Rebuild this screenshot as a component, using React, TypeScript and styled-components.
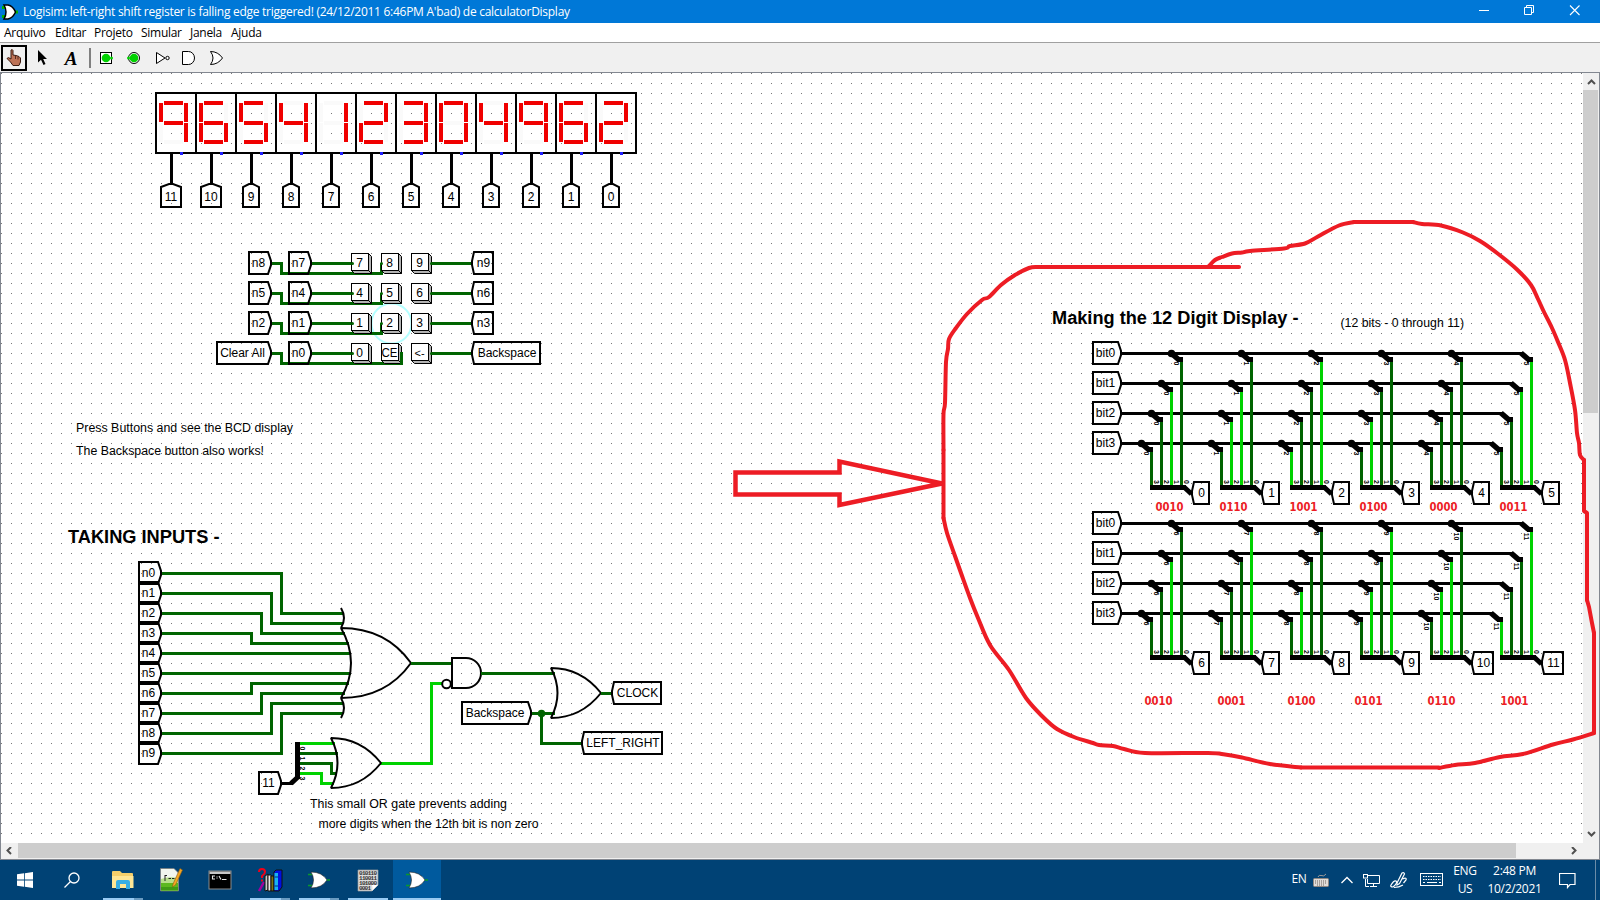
import React from "react";
import styled, { createGlobalStyle } from "styled-components";

const DARK = "#006400";
const LIVE = "#00d200";
const INK = "#000000";
const MARK = "#ed1c24";

const GlobalStyle = createGlobalStyle`
  * { box-sizing: border-box; }
  body { margin: 0; background: #fff; overflow: hidden; }
`;

const Desktop = styled.div`
  position: relative;
  width: 1600px;
  height: 900px;
  display: flex;
  flex-direction: column;
  overflow: hidden;
  font-family: "Open Sans", "Noto Sans", sans-serif;
`;

const TitleBar = styled.header`
  height: 23px;
  flex: none;
  display: flex;
  align-items: center;
  background: #0078d7;
  color: #fff;
  font-size: 12px;
`;
const TitleIcon = styled.div`
  width: 23px;
  height: 23px;
`;
const TitleText = styled.span`
  flex: 1;
  letter-spacing: -0.27px;
  white-space: nowrap;
  line-height: 22px;
`;
const WindowButton = styled.div`
  width: 45px;
  height: 23px;
`;
const WindowButtons = styled.div`
  display: flex;
  margin-right: 3px;
`;

const MenuBar = styled.nav`
  height: 20px;
  flex: none;
  display: flex;
  padding-left: 4px;
  background: #fff;
  border-bottom: 1px solid #a0a0a0;
  font-size: 12px;
  line-height: 19px;
  color: #000;
`;
const MenuItem = styled.span<{ $w: number }>`
  width: ${(p) => p.$w}px;
  letter-spacing: -0.28px;
  white-space: nowrap;
`;

const ToolBar = styled.div`
  height: 29px;
  flex: none;
  display: flex;
  align-items: center;
  background: #f0f0f0;
`;
const Tool = styled.div<{ $selected?: boolean }>`
  width: 26px;
  height: 26px;
  margin: 1px 1px 0;
  border: 2px solid ${(p) => (p.$selected ? "#000" : "transparent")};
  display: flex;
  align-items: center;
  justify-content: center;
`;
const ToolLetter = styled.span`
  font: italic bold 19px "Liberation Serif", serif;
  color: #000;
  padding: 1px 0 0 2px;
`;
const ToolDivider = styled.div`
  width: 2px;
  height: 20px;
  margin: 1px 1px 0 5px;
  background: #808080;
`;

const Workspace = styled.main`
  height: 788px;
  flex: none;
  display: grid;
  grid-template-columns: 1582px 15px;
  grid-template-rows: 770px 15px;
  border: 1px solid #828790;
  background: #f0f0f0;
`;
const CanvasPane = styled.div`
  background: #fff;
  overflow: hidden;
  svg { display: block; }
`;
const VScroll = styled.div`
  display: flex;
  flex-direction: column;
  background: #f0f0f0;
`;
const HScroll = styled.div`
  display: flex;
  background: #f0f0f0;
  grid-column: 1 / 3;
`;
const ScrollArrow = styled.div`
  width: 17px;
  height: 17px;
  display: flex;
  align-items: center;
  justify-content: center;
`;
const VThumb = styled.div`
  height: 323px;
  background: #cdcdcd;
  margin-bottom: auto;
`;
const HThumb = styled.div`
  width: 1498px;
  background: #cdcdcd;
  margin-right: auto;
`;
const Corner = styled.div`
  width: 16px;
`;

const TaskBar = styled.footer`
  height: 40px;
  flex: none;
  display: flex;
  background: #004275;
  color: #fff;
`;
const Task = styled.div<{ $active?: boolean; $w?: number; $shift?: number }>`
  width: ${(p) => p.$w ?? 49}px;
  height: 40px;
  padding-right: ${(p) => p.$shift ?? 0}px;
  position: relative;
  display: flex;
  align-items: center;
  justify-content: center;
  background: ${(p) => (p.$active ? "#005a9e" : "transparent")};
`;
const Underline = styled.div<{ $left: number; $w: number; $dim?: boolean }>`
  position: absolute;
  bottom: 0;
  left: ${(p) => p.$left}px;
  width: ${(p) => p.$w}px;
  height: 2px;
  background: ${(p) => (p.$dim ? "#6a9bc1" : "#99cbf3")};
`;
const Tray = styled.div`
  margin-left: auto;
  display: flex;
  align-items: center;
  font-size: 12px;
`;
const TrayCell = styled.div<{ $w: number }>`
  width: ${(p) => p.$w}px;
  height: 40px;
  display: flex;
  align-items: center;
  justify-content: center;
  letter-spacing: -0.3px;
  white-space: nowrap;
`;
const InputMode = styled.span`
  padding-bottom: 4px;
`;
const TwoLine = styled.div`
  text-align: center;
  line-height: 18px;
`;
const ShowDesktop = styled.div`
  width: 5px;
  height: 40px;
  border-left: 1px solid #6a8ca8;
`;
const Annotation = styled.svg`
  position: absolute;
  left: 0;
  top: 0;
  pointer-events: none;
`;

type Pt = [number, number];

const Wire = ({ pts, c = DARK, w = 3 }: { pts: Pt[]; c?: string; w?: number }) => (
  <polyline
    points={pts.map(([x, y]) => `${x + 0.5},${y + 0.5}`).join(" ")}
    fill="none"
    stroke={c}
    strokeWidth={w}
    strokeLinejoin="miter"
    strokeLinecap="square"
  />
);

const Label = ({
  x, y, w, children, size = 12, bold, anchor = "start",
}: {
  x: number; y: number; w?: number; children: string; size?: number; bold?: boolean;
  anchor?: "start" | "middle";
}) => (
  <text
    x={x}
    y={y}
    fontSize={size}
    fontWeight={bold ? 700 : 400}
    textAnchor={anchor}
    textLength={w}
    lengthAdjust="spacingAndGlyphs"
  >
    {children}
  </text>
);

/* Net label whose tip sits on a grid point: east (tip right), west or north. */
const Tunnel = ({ x, y, w, dir, text }: { x: number; y: number; w: number; dir: "e" | "w" | "n"; text: string }) => {
  let d: string;
  let tx: number;
  let ty = y + 4;
  if (dir === "n") {
    const h = w / 2;
    d = `M${x - 2} ${y + 1}H${x + 2}L${x + h} ${y + 4}V${y + 24}H${x - h}V${y + 4}Z`;
    tx = x;
    ty = y + 18;
  } else {
    const s = dir === "e" ? -1 : 1;
    const tip = dir === "e" ? x : x + 1;
    d = `M${tip} ${y - 2}V${y + 2}L${x + s * 3} ${y + 11}H${x + s * w}V${y - 11}H${x + s * 3}Z`;
    tx = x + (s * (w + 2)) / 2 + (dir === "e" ? -0.5 : 0.5);
  }
  return (
    <g>
      <path d={d} fill="none" stroke={INK} strokeWidth={2} />
      <Label x={tx} y={ty} anchor="middle">{text}</Label>
    </g>
  );
};

const SEGMENTS: Record<string, [number, number, number, number]> = {
  a: [8, 8, 19, 4],
  b: [28, 10, 4, 19],
  c: [28, 30, 4, 19],
  d: [8, 47, 19, 4],
  e: [3, 30, 4, 19],
  f: [3, 10, 4, 19],
  g: [8, 28, 19, 4],
};
const LIT: Record<string, string> = {
  "0": "abcdef", "1": "bc", "2": "abged", "3": "abgcd", "4": "fgbc",
  "5": "afgcd", "6": "afgecd", "9": "abfgc",
};

const HexDigit = ({ i, v }: { i: number; v: string }) => {
  const x = 156 + 40 * i;
  return (
    <g>
      {Object.entries(SEGMENTS).map(([k, [sx, sy, w, h]]) =>
        LIT[v].includes(k) ? null : <rect key={k} x={x + sx} y={93 + sy} width={w} height={h} fill="#fafafa" />
      )}
      {Object.entries(SEGMENTS).map(([k, [sx, sy, w, h]]) =>
        LIT[v].includes(k) ? <rect key={k} x={x + sx} y={93 + sy} width={w} height={h} fill="#f00000" /> : null
      )}
      <rect x={x} y={93} width={40} height={60} fill="none" stroke={INK} strokeWidth={2} />
      <rect x={x + 24} y={152} width={3} height={3} fill="#2020ff" />
      <Wire pts={[[x + 15, 154], [x + 15, 182]]} c={INK} />
      <Tunnel x={x + 15} y={183} w={i < 2 ? 20 : 16} dir="n" text={String(11 - i)} />
    </g>
  );
};

const PushButton = ({ x, y, text }: { x: number; y: number; text: string }) => (
  <g>
    <path d={`M${x + 17.5} ${y + 0.5}l3 3v17h-17l-3 -3z`} fill="#b4b4b4" stroke={INK} />
    <rect x={x + 0.5} y={y + 0.5} width={17} height={17} fill="#fff" stroke={INK} />
    <path d={`M${x + 17.5} ${y + 17.5}l3 3`} stroke={INK} />
    <Label x={x + 8.5} y={y + 13.5} anchor="middle" w={text === "CE" ? 16 : undefined} size={text === "<-" ? 11 : 12}>{text}</Label>
  </g>
);

const Tiny = ({ x, y, children }: { x: number; y: number; children: string }) => (
  <text transform={`translate(${x} ${y}) rotate(90)`} fontSize={7} fontWeight={700} textAnchor="middle">
    {children}
  </text>
);

const OrGate = ({ x, y, size }: { x: number; y: number; size: 50 | 70 }) => {
  const [cx, h, back] = size === 70 ? [25, 35, 50] : [20, 25, 37];
  return (
    <path
      d={`M${x} ${y}Q${x - cx} ${y - h} ${x - size} ${y - h}Q${x - back} ${y} ${x - size} ${y + h}Q${x - cx} ${y + h} ${x} ${y}Z`}
      fill="none"
      stroke={INK}
      strokeWidth={2}
      strokeLinejoin="bevel"
    />
  );
};

const Bank = ({ y0, first, values }: { y0: number; first: number; values: string[] }) => (
  <g>
    {[0, 1, 2, 3].map((b) => {
      const y = y0 + 30 * b;
      return (
        <g key={b}>
          <Wire pts={[[1122, y], [1520 - 10 * b, y]]} c={INK} />
          <Tunnel x={1121} y={y} w={28} dir="e" text={`bit${b}`} />
        </g>
      );
    })}
    {values.map((v, g) => (
      <g key={g}>
        {[0, 1, 2, 3].map((b) => {
          const jx = 1171 + 70 * g - 10 * b;
          const y = y0 + 30 * b;
          return (
            <g key={b}>
              <rect x={jx + 9} y={y + 9} width={3} height={y0 + 132 - y - 9} fill={v[3 - b] === "1" ? LIVE : DARK} />
              {g < 5 && <circle cx={jx + 0.5} cy={y + 0.5} r={3.8} />}
              <path d={`M${jx} ${y}L${jx + 7.5} ${y + 6.5}`} stroke={INK} strokeWidth={5.5} />
              <rect x={jx + 6} y={y + 4} width={6} height={5} />
              <Tiny x={jx + 3} y={y + (first + g > 9 ? 13.5 : 10.5)}>{String(first + g)}</Tiny>
            </g>
          );
        })}
        <rect x={1150 + 70 * g} y={y0 + 132} width={36} height={5} />
        <path d={`M${1184 + 70 * g} ${y0 + 134}L${1191.5 + 70 * g} ${y0 + 141}`} stroke={INK} strokeWidth={5} />
        {["3", "2", "1", "0"].map((t, k) => (
          <Tiny key={t} x={1154 + 70 * g + 10 * k} y={y0 + 129}>{t}</Tiny>
        ))}
        <Tunnel x={1191 + 70 * g} y={y0 + 140} w={first + g > 9 ? 22 : 18} dir="w" text={String(first + g)} />
      </g>
    ))}
  </g>
);

const KEY_ROWS: { y: number; l: string; m: string; r: string; keys: string[] }[] = [
  { y: 263, l: "n8", m: "n7", r: "n9", keys: ["7", "8", "9"] },
  { y: 293, l: "n5", m: "n4", r: "n6", keys: ["4", "5", "6"] },
  { y: 323, l: "n2", m: "n1", r: "n3", keys: ["1", "2", "3"] },
  { y: 353, l: "Clear All", m: "n0", r: "Backspace", keys: ["0", "CE", "<-"] },
];

const INPUT_BENDS: [number, number, number][] = [
  [281, 613, 341], [271, 623, 341], [261, 633, 343], [251, 643, 347], [0, 653, 349],
  [0, 673, 349], [251, 683, 347], [261, 693, 343], [271, 703, 341], [281, 713, 341],
];

const Circuit = () => (
  <svg width={1582} height={770} viewBox="1 73 1582 770" fontFamily='"Liberation Sans", Arial, sans-serif'>
    <defs>
      <pattern id="grid" x={1} y={73} width={10} height={10} patternUnits="userSpaceOnUse">
        <rect width={1} height={1} fill="#777" />
      </pattern>
    </defs>
    <rect x={1} y={73} width={1582} height={770} fill="#fff" />
    <rect x={1} y={73} width={1582} height={770} fill="url(#grid)" />

    {"965412304962".split("").map((v, i) => <HexDigit key={i} i={i} v={v} />)}

    <circle cx={391.5} cy={323.5} r={20} fill="none" stroke="#b3ffff" strokeWidth={2} />
    {KEY_ROWS.map(({ y, l, m, r, keys }) => {
      const last = keys[1] === "CE";
      const end = last ? 401 : 381;
      return (
        <g key={y}>
          <Wire pts={[[272, y], [281, y], [281, y + 10], [end, y + 10], [end, y + 1]]} />
          <Wire pts={[[312, y], [351, y]]} />
          <Wire pts={[[431, y], [470, y]]} />
          <Tunnel x={271} y={y} w={last ? 54 : 22} dir="e" text={l} />
          <Tunnel x={311} y={y} w={22} dir="e" text={m} />
          <Tunnel x={471} y={y} w={last ? 69 : 22} dir="w" text={r} />
          <PushButton x={351} y={y - 10} text={keys[0]} />
          <PushButton x={381} y={y - 10} text={keys[1]} />
          <PushButton x={411} y={y - 10} text={keys[2]} />
          <circle cx={352.5} cy={y + 0.5} r={1.5} fill={DARK} />
          {last ? (
            <path d={`M401.5 ${y - 1}V${y + 11}`} stroke={DARK} strokeWidth={3} />
          ) : (
            <circle cx={381.5} cy={y + 0.5} r={1.5} fill={DARK} />
          )}
          <circle cx={431.5} cy={y + 0.5} r={1.5} fill={DARK} />
        </g>
      );
    })}

    <Label x={76} y={432} w={217}>Press Buttons and see the BCD display</Label>
    <Label x={76} y={455} w={188}>The Backspace button also works!</Label>
    <Label x={68} y={543} w={151.5} size={18} bold>TAKING INPUTS -</Label>

    {INPUT_BENDS.map(([bx, ty, ex], i) => {
      const y = 573 + 20 * i;
      return (
        <g key={i}>
          <Wire pts={bx ? [[162, y], [bx, y], [bx, ty], [ex, ty]] : [[162, y], [ex, y]]} />
          <Tunnel x={161} y={y} w={22} dir="e" text={`n${i}`} />
        </g>
      );
    })}
    <OrGate x={411} y={663} size={70} />
    <path d="M341 608Q347 618 341 628M341 698Q347 708 341 718" fill="none" stroke={INK} strokeWidth={2} />

    <Wire pts={[[412, 663], [451, 663]]} />
    <Wire pts={[[381, 763], [431, 763], [431, 683], [441, 683]]} c={LIVE} />
    <path d="M452 658H466A15 15 0 0 1 466 688H452Z" fill="none" stroke={INK} strokeWidth={2} />
    <circle cx={446.5} cy={684} r={4.3} fill="#fff" stroke={INK} strokeWidth={2} />
    <Wire pts={[[482, 673], [553, 673]]} />
    <Wire pts={[[532, 713], [553, 713]]} />
    <Wire pts={[[541, 713], [541, 743], [580, 743]]} />
    <circle cx={541.5} cy={713.5} r={3.8} fill={DARK} />
    <OrGate x={601} y={693} size={50} />
    <Wire pts={[[602, 693], [610, 693]]} />
    <Tunnel x={611} y={693} w={50} dir="w" text="CLOCK" />
    <Tunnel x={531} y={713} w={69} dir="e" text="Backspace" />
    <Tunnel x={581} y={743} w={81} dir="w" text="LEFT_RIGHT" />

    <Wire pts={[[301, 743], [333, 743]]} c={LIVE} />
    <Wire pts={[[301, 753], [336, 753]]} />
    <Wire pts={[[301, 763], [331, 763], [331, 773], [335, 773]]} />
    <Wire pts={[[301, 773], [321, 773], [321, 783], [332, 783]]} c={LIVE} />
    <OrGate x={381} y={763} size={50} />
    <rect x={295} y={742} width={5} height={37} />
    <path d="M299 776L291 783.5" stroke={INK} strokeWidth={5} />
    <Wire pts={[[282, 783], [291, 783]]} c={INK} />
    <Tunnel x={281} y={783} w={22} dir="e" text="11" />
    {["0", "1", "2", "3"].map((t, k) => (
      <Tiny key={t} x={299.5} y={748.5 + 10 * k}>{t}</Tiny>
    ))}
    <Label x={310} y={808} w={197}>This small OR gate prevents adding</Label>
    <Label x={318.5} y={828} w={220}>more digits when the 12th bit is non zero</Label>

    <Label x={1052} y={324} w={246.5} size={18} bold>Making the 12 Digit Display -</Label>
    <Label x={1340.5} y={327} w={123.5}>(12 bits - 0 through 11)</Label>
    <Bank y0={353} first={0} values={["0010", "0110", "1001", "0100", "0000", "0011"]} />
    <Bank y0={523} first={6} values={["0010", "0001", "0100", "0101", "0110", "1001"]} />
  </svg>
);

const BINARY_NOTES: [number, number, string][] = [
  [1155.5, 510.5, "0010"], [1219.5, 510.5, "0110"], [1289.5, 510.5, "1001"],
  [1359.5, 510.5, "0100"], [1429.5, 510.5, "0000"], [1499.5, 510.5, "0011"],
  [1144.5, 704.5, "0010"], [1217.5, 704.5, "0001"], [1287.5, 704.5, "0100"],
  [1354.5, 704.5, "0101"], [1427.5, 704.5, "0110"], [1500.5, 704.5, "1001"],
];

const STROKES: Pt[][] = [
  [[1239, 267], [1037, 267]],
  [
    [1037, 267], [1029, 268], [1015, 275], [1001, 285], [989, 297], [982, 300], [967, 314], [956, 328],
    [949, 339], [948, 349], [946, 362], [945, 403], [943.5, 414], [943.5, 450],
  ],
  [[943.5, 450], [943.5, 518]],
  [
    [943.5, 518], [947, 533], [955, 556], [961, 573], [970, 598], [978, 618], [990, 645], [1009, 670],
    [1026, 698], [1043, 717], [1057, 729], [1074, 737], [1093, 743], [1099, 745], [1113, 746],
    [1124, 749], [1145, 753], [1208, 753], [1225, 754.5], [1242, 757.5], [1270, 764], [1301, 767.5],
  ],
  [[1301, 767.5], [1439, 767.5]],
  [[1439, 768], [1455, 765], [1475, 763], [1500, 757], [1523, 754], [1553, 744.5], [1573, 739.5], [1594, 733]],
  [[1594, 733], [1594, 633]],
  [[1594, 633], [1592, 623], [1589, 607], [1587, 600]],
  [[1587, 600], [1587, 513], [1584, 511], [1584, 460]],
  [
    [1584, 460], [1580, 455], [1579, 443], [1577, 433], [1575, 410], [1570, 383], [1565, 360], [1558, 342],
    [1552, 328], [1544, 312], [1538, 299], [1531, 285], [1517, 269.5], [1497, 253], [1480, 241],
    [1463, 232.5], [1441, 225.5], [1422, 224], [1413, 222],
  ],
  [[1413, 222], [1354, 222]],
  [
    [1354, 222], [1339, 225.5], [1318, 236.5], [1305, 243.5], [1290, 246], [1284, 248.5], [1250, 251],
    [1242, 252.5], [1232, 253.500], [1222, 257], [1215, 260], [1209, 266],
  ],
];

/* Catmull-Rom curve through the sampled pen points. */
const curve = (p: Pt[]) =>
  p.length < 5
    ? `M${p.map((q) => q.join(" ")).join("L")}`
    : p.slice(1).reduce((d, q, i) => {
        const a = p[Math.max(i - 1, 0)];
        const b = p[i];
        const n = p[Math.min(i + 2, p.length - 1)];
        return `${d}C${b[0] + (q[0] - a[0]) / 6} ${b[1] + (q[1] - a[1]) / 6} ${q[0] - (n[0] - b[0]) / 6} ${q[1] - (n[1] - b[1]) / 6} ${q[0]} ${q[1]}`;
      }, `M${p[0][0]} ${p[0][1]}`);

const Marks = () => (
  <Annotation width={1600} height={900} fontFamily='"DejaVu Sans", Verdana, sans-serif' fontSize={11.5} fontWeight={700} fill={MARK}>
    {STROKES.map((s, i) => (
      <path key={i} d={curve(s)} fill="none" stroke={MARK} strokeWidth={4} strokeLinejoin="round" strokeLinecap="round" />
    ))}
    <path d="M735.5 472.5H839.5V461.5L942 483.5L839.5 505V494.5H735.5Z" fill="none" stroke={MARK} strokeWidth={4.5} />
    {BINARY_NOTES.map(([x, y, t]) => (
      <text key={`${x}-${y}`} x={x} y={y} textLength={28} lengthAdjust="spacingAndGlyphs">{t}</text>
    ))}
  </Annotation>
);

const GateGlyph = () => (
  <svg width={24} height={20} viewBox="0 0 24 20">
    <path d="M1 4.500H7M1 15.500H7M18 10H23" stroke="#0a9a2a" strokeWidth={1.5} />
    <path d="M4 2Q15 2 20 10Q15 18 4 18Q9 10 4 2Z" fill="#fff" stroke="#222" strokeWidth={0.6} />
  </svg>
);

const Chevron = ({ d }: { d: string }) => (
  <svg width={9} height={9} viewBox="0 0 9 9">
    <path d={d} fill="none" stroke="#505050" strokeWidth={2} />
  </svg>
);

const FolderIcon = () => (
  <svg width={22} height={20} viewBox="0 0 22 20">
    <path d="M0 2Q0 1 1 1H8L10 3H20Q21 3 21 4V18H0Z" fill="#f5cf6b" />
    <path d="M0 6H21.500V18H0Z" fill="#ffe695" />
    <path d="M4 18V12Q4 10 6 10H16Q18 10 18 12V19H14V14H8V19H4Z" fill="#36aee6" />
  </svg>
);
const NotepadIcon = () => (
  <svg width={24} height={26} viewBox="0 0 24 26">
    <path d="M1.500 1.500H15L19.500 6V24H1.500Z" fill="#f2f6ee" stroke="#777" strokeWidth={0.7} />
    <path d="M2 12Q10 9 19 11V23.500H2Z" fill="#b8e08a" />
    <path d="M2 16H19V23.500H2Z" fill="#5cb81e" />
    <path d="M2 20H19V23.500H2Z" fill="#3f9a14" />
    <path d="M6 8V14M6 8.500H8M9.500 11.500H12M13 11.500H15.500" stroke="#222" fill="none" />
    <path d="M14 17L21 1.500L23.500 3L16.500 18L13.500 20Z" fill="#f5a623" stroke="#8a5a10" strokeWidth={0.6} />
  </svg>
);
const ConsoleIcon = () => (
  <svg width={24} height={20} viewBox="0 0 24 20">
    <rect x={1} y={1} width={22} height={18} fill="#000" stroke="#8c8c8c" />
    <rect x={1.500} y={1.500} width={21} height={2.500} fill="#c8c8c8" />
    <path d="M7 6H4.500V9H7M9 6.500V7.500M9 8.500V9M11 6L13 9.500M14 9.500H18.500" stroke="#e8e8e8" strokeWidth={1.100} fill="none" />
  </svg>
);
const BooksIcon = () => (
  <svg width={26} height={24} viewBox="0 0 26 24">
    <path d="M2 4Q2 1 5 1Q8 1 8 4Q8 6 5 8V10M5 11.500V13.500" fill="none" stroke="#f00018" strokeWidth={2} />
    <path d="M2 23L7 14" stroke="#a000a0" strokeWidth={2.500} />
    <path d="M8 8L11 6V22L8 23Z" fill="#c8c8c8" stroke="#111" />
    <path d="M11 7H14V23H11Z" fill="#e8e8e8" stroke="#111" />
    <path d="M14 8H17V23H14Z" fill="#7a7410" stroke="#111" />
    <path d="M17 4L19 2H25V19L22 23H17Z" fill="#0010e0" stroke="#111" />
    <path d="M17.500 5H21V22H17.500Z" fill="#18b4f0" />
    <path d="M17.500 9H21M17.500 18H21" stroke="#003080" />
  </svg>
);
const BinaryIcon = () => (
  <svg width={22} height={24} viewBox="0 0 22 24" fontFamily='"Liberation Mono", monospace' fontWeight={700} fontSize={6} fill="#333">
    <path d="M1 2H21V17L15 23H1Z" fill="#dcdcdc" stroke="#999" strokeWidth={0.7} />
    <text x={2} y={7} textLength={18}>010110</text>
    <text x={2} y={12} textLength={18}>110011</text>
    <text x={2} y={17} textLength={18}>101000</text>
    <text x={2} y={22} textLength={12}>0001</text>
    <path d="M21 17L15 23Q16 19 15 17Z" fill="#fff" />
  </svg>
);

const KeyboardIcon = () => (
  <svg width={24} height={14} viewBox="0 0 24 14">
    <rect x={0.500} y={0.500} width={22} height={12} fill="none" stroke="#fff" />
    <path d="M3 3.500H21M3 6.500H21" stroke="#fff" strokeDasharray="1.500 1" />
    <path d="M3 9.500H5M7 9.500H17M19 9.500H21" stroke="#fff" />
  </svg>
);

const MENU: [string, number][] = [
  ["Arquivo", 51], ["Editar", 39], ["Projeto", 47], ["Simular", 49], ["Janela", 41], ["Ajuda", 40],
];

export default function App() {
  return (
    <Desktop>
      <GlobalStyle />
      <TitleBar>
        <TitleIcon>
          <svg width={23} height={23}>
            <path d="M2 7.500H6M2 16.500H6M13 12H18" stroke="#00b400" strokeWidth={3} />
            <path d="M4 5H8Q13 6 15.500 12Q13 18 8 19H4Q8 12 4 5Z" fill="#fff" stroke="#000" strokeWidth={1.500} />
          </svg>
        </TitleIcon>
        <TitleText>Logisim: left-right shift register is falling edge triggered! (24/12/2011 6:46PM A'bad) de calculatorDisplay</TitleText>
        <WindowButtons>
          <WindowButton>
            <svg width={45} height={23}><path d="M17 10.500H27" stroke="#fff" /></svg>
          </WindowButton>
          <WindowButton>
            <svg width={45} height={23}>
              <path d="M17.500 7.500H24.500V14.500H17.500ZM19.500 7V5.500H26.500V12.500H25" stroke="#fff" fill="none" />
            </svg>
          </WindowButton>
          <WindowButton>
            <svg width={45} height={23}><path d="M18 5.500L27.500 15M27.500 5.500L18 15" stroke="#fff" strokeWidth={1.100} /></svg>
          </WindowButton>
        </WindowButtons>
      </TitleBar>

      <MenuBar>
        {MENU.map(([t, w]) => <MenuItem key={t} $w={w}>{t}</MenuItem>)}
      </MenuBar>

      <ToolBar>
        <Tool $selected>
          <svg width={16} height={18} viewBox="0 0 16 18">
            <path d="M5 1Q6.500 0 7 1.500V6L10 6.500L13 7.500L14.500 9V13L13 16.500H7L4.500 13L1 9.500Q2 7.500 5 10Z" fill="#bd7256" stroke="#3a1a10" />
            <path d="M9.500 7V10M12 8V10.500" stroke="#3a1a10" strokeWidth={0.800} />
          </svg>
        </Tool>
        <Tool>
          <svg width={16} height={18} viewBox="0 0 16 18">
            <path d="M4 1V13.500L7 10.800L9.500 16L11.500 15L9.200 10H13Z" fill="#000" />
          </svg>
        </Tool>
        <Tool><ToolLetter>A</ToolLetter></Tool>
        <ToolDivider />
        <Tool>
          <svg width={16} height={16}>
            <rect x={2.500} y={2.500} width={11} height={11} fill="#fff" stroke="#000" />
            <circle cx={8} cy={8} r={4.300} fill={LIVE} /><circle cx={13.500} cy={8} r={1.500} fill={LIVE} />
          </svg>
        </Tool>
        <Tool>
          <svg width={16} height={16}>
            <circle cx={8} cy={8} r={5.500} fill="#fff" stroke="#000" />
            <circle cx={8} cy={8} r={4.300} fill={LIVE} /><circle cx={2.500} cy={8} r={1.500} fill={LIVE} />
          </svg>
        </Tool>
        <Tool>
          <svg width={16} height={16}>
            <path d="M2.500 2.500L11 8L2.500 13.500Z" fill="#fff" stroke="#000" />
            <circle cx={13.500} cy={8} r={1.700} fill="#fff" stroke="#000" />
          </svg>
        </Tool>
        <Tool>
          <svg width={16} height={16}>
            <path d="M0.500 1.500H6.500A6 6.500 0 0 1 6.500 14.500H0.500Z" fill="#fff" stroke="#000" />
          </svg>
        </Tool>
        <Tool>
          <svg width={16} height={16}>
            <path d="M0.500 1.500Q8 1.500 12.500 8Q8 14.500 0.500 14.500Q5.500 8 0.500 1.500Z" fill="#fff" stroke="#000" />
          </svg>
        </Tool>
      </ToolBar>

      <Workspace>
        <CanvasPane><Circuit /></CanvasPane>
        <VScroll>
          <ScrollArrow><Chevron d="M1 7L4.500 3.500L8 7" /></ScrollArrow>
          <VThumb />
          <ScrollArrow><Chevron d="M1 2L4.500 5.500L8 2" /></ScrollArrow>
        </VScroll>
        <HScroll>
          <ScrollArrow><Chevron d="M6 0L2.500 3.500L6 7" /></ScrollArrow>
          <HThumb />
          <ScrollArrow><Chevron d="M3 0L6.500 3.500L3 7" /></ScrollArrow>
          <Corner />
        </HScroll>
      </Workspace>

      <TaskBar>
        <Task $w={49}>
          <svg width={16} height={16}>
            <path d="M0 2.300L7 1.300V7.600H0ZM7.800 1.200L16 0V7.600H7.800ZM0 8.400H7V14.700L0 13.700ZM7.800 8.400H16V16L7.800 14.800Z" fill="#fff" />
          </svg>
        </Task>
        <Task $w={49} $shift={3}>
          <svg width={16} height={16}>
            <circle cx={10} cy={6} r={5} fill="none" stroke="#fff" strokeWidth={1.300} />
            <path d="M6.500 9.500L0.500 15.500" stroke="#fff" strokeWidth={1.300} />
          </svg>
        </Task>
        <Task><FolderIcon /><Underline $left={5} $w={31} /><Underline $left={36} $w={9} $dim /></Task>
        <Task $shift={2}><NotepadIcon /></Task>
        <Task $shift={1}><ConsoleIcon /></Task>
        <Task><BooksIcon /><Underline $left={5} $w={31} /><Underline $left={36} $w={9} $dim /></Task>
        <Task><GateGlyph /><Underline $left={5} $w={31} /><Underline $left={36} $w={9} $dim /></Task>
        <Task $w={50}><BinaryIcon /><Underline $left={5} $w={40} /></Task>
        <Task $active $w={48}><GateGlyph /><Underline $left={0} $w={48} /></Task>
        <Tray>
          <TrayCell $w={20}><InputMode>EN</InputMode></TrayCell>
          <TrayCell $w={24}>
            <svg width={16} height={15}>
              <path d="M5 4Q6 1.500 8 2.500Q11 4 13 1" fill="none" stroke="#9a9a9a" />
              <rect x={0.500} y={5.500} width={15} height={8} rx={1} fill="#e0dcd8" stroke="#8f8781" />
              <path d="M2 8H14M2 10H14M4 12H12" stroke="#6a625c" strokeDasharray="1 1" />
            </svg>
          </TrayCell>
          <TrayCell $w={28}>
            <svg width={12} height={8}><path d="M0.500 7L6 1.500L11.500 7" fill="none" stroke="#fff" strokeWidth={1.300} /></svg>
          </TrayCell>
          <TrayCell $w={20}>
            <svg width={17} height={15}>
              <path d="M5 2.500H16.500V10.500H4.500V6M10.500 11V13.500M7 13.500H14M2.500 6V13.500H6" fill="none" stroke="#fff" />
              <rect x={0.500} y={1.500} width={4} height={3.500} fill="none" stroke="#fff" />
            </svg>
          </TrayCell>
          <TrayCell $w={36}>
            <svg width={18} height={18}>
              <path d="M1 14Q4 9 6 10Q8 12 3 16Q0 16 1 14M4 16.500Q9 16.500 13 14" fill="none" stroke="#fff" strokeWidth={1.200} />
              <path d="M7 12L12 2Q14 1 14.500 3L9.500 12.500L7 14ZM12.500 8Q17 6 16 9L13.500 12" fill="none" stroke="#fff" strokeWidth={1.200} />
            </svg>
          </TrayCell>
          <TrayCell $w={29}><KeyboardIcon /></TrayCell>
          <TrayCell $w={38}><TwoLine>ENG<br />US</TwoLine></TrayCell>
          <TrayCell $w={61}><TwoLine>2:48 PM<br />10/2/2021</TwoLine></TrayCell>
          <TrayCell $w={44}>
            <svg width={17} height={17}>
              <path d="M0.500 1.500H16V12.500H11L8.500 15.500V12.500H0.500Z" fill="none" stroke="#fff" strokeWidth={1.200} />
            </svg>
          </TrayCell>
          <TrayCell $w={6} />
          <ShowDesktop />
        </Tray>
      </TaskBar>
      <Marks />
    </Desktop>
  );
}
